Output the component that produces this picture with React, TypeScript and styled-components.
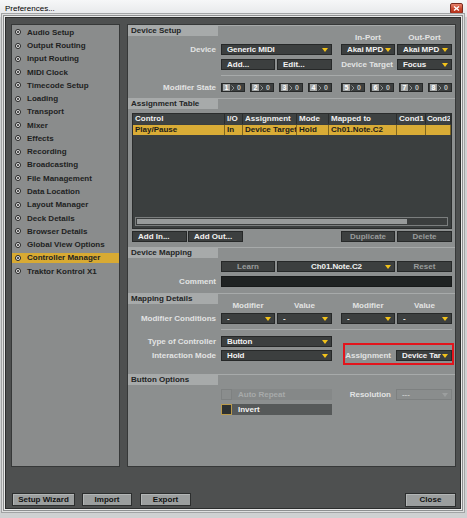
import React from "react";
import styled, { createGlobalStyle, css } from "styled-components";

const FONT = `"Liberation Sans", Arial, sans-serif`;

const GlobalStyle = createGlobalStyle`
  html, body { margin: 0; padding: 0; }
  body { font-family: ${FONT}; background: #ffffff; }
  * { box-sizing: border-box; }
`;

const Window = styled.div`
  width: 467px;
  height: 518px;
  display: flex;
  flex-direction: column;
  background: #cfd1d2;
  overflow: hidden;
`;

const TitleBar = styled.div`
  height: 17px;
  flex: none;
  display: flex;
  align-items: center;
  justify-content: space-between;
  padding: 0 4px 0 5px;
  background: linear-gradient(#f6f7f8, #e4e6e8);
  font: 400 8px ${FONT};
  color: #000;
`;

const CloseBox = styled.div`
  width: 13px;
  height: 11px;
  border-radius: 2px;
  margin-top: -1px;
  background: linear-gradient(#e8856f, #c8452c 55%, #b2311b);
  border: 1px solid #7a2a1e;
  display: flex;
  align-items: center;
  justify-content: center;
`;

const Client = styled.div`
  height: 492px;
  flex: none;
  margin: 0 6px 0 5px;
  background: #4e5050;
  border: 1px solid #2b2d2d;
  box-shadow: 0 0 0 1px #e9eaea, 0 0 0 2px #8d8f90, 0 0 0 3px #dfe0e0, 0 0 0 4px #a2a4a5;
  padding: 6px 4px 0 5px;
  display: flex;
  flex-direction: column;
`;

const Panels = styled.div`
  height: 443px;
  flex: none;
  display: flex;
  gap: 7px;
`;

const Sidebar = styled.div`
  width: 109px;
  flex: none;
  background: #8a8c8c;
  border: 1px solid #363838;
  padding-top: 2.3px;
  display: flex;
  flex-direction: column;
  gap: 3.28px;
`;

const NavItem = styled.div<{ $active?: boolean }>`
  height: 10px;
  display: flex;
  align-items: center;
  gap: 6px;
  padding-left: 3px;
  font: 700 8px ${FONT};
  color: #1e1f1f;
  white-space: nowrap;
  background: ${(p) => (p.$active ? "#d8aa33" : "transparent")};
`;

const Main = styled.div`
  flex: 1;
  background: #8c8f8f;
  border: 1px solid #363838;
  display: flex;
  flex-direction: column;
`;

const Section = styled.div<{ $mt?: number }>`
  border-top: 1px solid #a7aaaa;
  margin-top: ${(p) => p.$mt ?? 0}px;
  display: flex;
  flex-direction: column;
`;

const SectionHead = styled.div`
  width: 90px;
  height: 10px;
  background: #a7aaaa;
  color: #232525;
  font: 700 8px ${FONT};
  line-height: 10px;
  padding-left: 3px;
  white-space: nowrap;
`;

const Row = styled.div<{ $mt?: number; $h?: number; $pl?: number }>`
  display: flex;
  align-items: center;
  flex: none;
  height: ${(p) => p.$h ?? 11}px;
  margin-top: ${(p) => p.$mt ?? 0}px;
  padding-left: ${(p) => p.$pl ?? 0}px;
`;

const Label = styled.div<{ $w?: number; $mr?: number }>`
  width: ${(p) => p.$w ?? 88}px;
  margin-right: ${(p) => p.$mr ?? 5}px;
  flex: none;
  text-align: right;
  color: #e2e3e3;
  font: 700 8px ${FONT};
  white-space: nowrap;
`;

const Group = styled.div<{ $between?: boolean; $tight?: boolean }>`
  width: 111px;
  flex: none;
  display: flex;
  align-items: center;
  gap: ${(p) => (p.$tight ? 0 : 2)}px;
  justify-content: ${(p) => (p.$between ? "space-between" : "flex-start")};
`;

const GroupGap = styled.div`
  width: 9px;
  flex: none;
`;

const Fill = styled.div`
  flex: 1;
`;

const Caption = styled.div<{ $w: number }>`
  width: ${(p) => p.$w}px;
  flex: none;
  text-align: center;
  color: #e2e3e3;
  font: 700 8px ${FONT};
  line-height: 8px;
  white-space: nowrap;
`;

const darkBox = css`
  height: 11px;
  flex: none;
  background: #3c3f3f;
  border: 1px solid #262828;
  font: 700 8px ${FONT};
  line-height: 9px;
  white-space: nowrap;
  overflow: hidden;
`;

const Dropdown = styled.div<{ $w: number; $disabled?: boolean }>`
  ${darkBox};
  width: ${(p) => p.$w}px;
  display: flex;
  align-items: center;
  padding: 0 3px 0 5px;
  gap: 1px;
  color: ${(p) => (p.$disabled ? "#c5c7c7" : "#f2f2f2")};
  ${(p) =>
    p.$disabled &&
    css`
      background: #8a8d8d;
      border-color: #7d8080;
    `}
`;

const DropText = styled.span<{ $center?: boolean }>`
  flex: 1;
  overflow: hidden;
  letter-spacing: -0.1px;
  text-align: ${(p) => (p.$center ? "center" : "left")};
  padding-left: ${(p) => (p.$center ? 6 : 0)}px;
`;

const Button = styled.div<{ $w: number; $dim?: boolean; $center?: boolean }>`
  ${darkBox};
  width: ${(p) => p.$w}px;
  color: ${(p) => (p.$dim ? "#999c9c" : "#f2f2f2")};
  text-align: ${(p) => (p.$center ? "center" : "left")};
  padding-left: ${(p) => (p.$center ? 0 : 5)}px;
`;

const TextField = styled.div<{ $w: number }>`
  width: ${(p) => p.$w}px;
  height: 11px;
  flex: none;
  background: #1f2222;
  border: 1px solid #171919;
`;

const Separator = styled.div<{ $mt: number }>`
  height: 1px;
  width: 231px;
  margin: ${(p) => p.$mt}px 0 0 93px;
  background: #a7aaaa;
  flex: none;
`;

const ModBox = styled.div`
  width: 24px;
  height: 9px;
  flex: none;
  background: #3d4040;
  border: 1px solid #262828;
  display: flex;
  align-items: center;
  padding-left: 1px;
  gap: 1px;
  font: 700 7px ${FONT};
`;

const ModNum = styled.span`
  width: 7px;
  height: 7px;
  background: #a3a6a6;
  color: #ffffff;
  text-align: center;
  line-height: 7px;
`;

const ModZero = styled.span`
  color: #c3c5c5;
  line-height: 7px;
  margin-left: 1px;
`;

const Table = styled.div`
  margin: 4px 0 0 4px;
  width: 320px;
  height: 116px;
  flex: none;
  background: #3b3f3f;
  border: 1px solid #2a2c2c;
  display: flex;
  flex-direction: column;
`;

const TRow = styled.div<{ $sel?: boolean }>`
  display: grid;
  grid-template-columns: 92px 18px 54px 32px 68px 29px 1fr;
  height: 10px;
  flex: none;
  margin-top: ${(p) => (p.$sel ? 1 : 0)}px;
  background: ${(p) => (p.$sel ? "#d9ac36" : "#3e4242")};
  color: ${(p) => (p.$sel ? "#1b1b1b" : "#f0f0f0")};
`;

const TCell = styled.div<{ $sel?: boolean }>`
  font: 700 8px ${FONT};
  line-height: 10px;
  padding-left: 2px;
  white-space: nowrap;
  overflow: hidden;
  border-right: 1px solid ${(p) => (p.$sel ? "#7e6620" : "#2a2d2d")};
  &:last-child {
    padding-left: 1px;
    letter-spacing: -0.2px;
  }
`;

const TBody = styled.div`
  flex: 1;
`;

const ScrollTrack = styled.div`
  height: 9px;
  margin: 0 3px 2px 2px;
  border: 1px solid #7b7e7e;
  background: #3b3e3e;
  padding: 1px;
  flex: none;
`;

const ScrollThumb = styled.div`
  height: 100%;
  background: #989b9b;
`;

const Check = styled.div<{ $on?: boolean }>`
  width: 11px;
  height: 11px;
  flex: none;
  border: 1px solid ${(p) => (p.$on ? "#b99a4c" : "#7e8181")};
  background: ${(p) => (p.$on ? "#2d3131" : "#8a8d8d")};
`;

const CheckBar = styled.div<{ $on?: boolean }>`
  width: 100px;
  height: 11px;
  flex: none;
  background: ${(p) => (p.$on ? "#565959" : "#858888")};
  color: ${(p) => (p.$on ? "#f2f2f2" : "#a7aaaa")};
  font: 700 8px ${FONT};
  line-height: 11px;
  padding-left: 6px;
`;

const Highlight = styled.div`
  position: relative;
  width: 111px;
  flex: none;
  display: flex;
  align-items: center;
  &::after {
    content: "";
    position: absolute;
    top: -7px;
    bottom: -4px;
    left: 2px;
    right: -2px;
    border: 2px solid #e3141c;
    pointer-events: none;
  }
`;

const Footer = styled.div`
  margin-top: 26px;
  height: 14px;
  flex: none;
  display: flex;
  align-items: flex-start;
  padding-left: 1px;
`;

const FooterButton = styled.div<{ $w: number; $mr?: number; $h?: number }>`
  width: ${(p) => p.$w}px;
  height: ${(p) => p.$h ?? 13}px;
  margin-right: ${(p) => p.$mr ?? 0}px;
  flex: none;
  background: #9b9e9e;
  border: 1px solid #2c2e2e;
  box-shadow: inset 1px 1px 0 #b3b6b6;
  color: #111;
  font: 700 8px ${FONT};
  line-height: ${(p) => (p.$h ?? 13) - 2}px;
  text-align: center;
`;

const Arrow = ({ color = "#f1c21b" }: { color?: string }) => (
  <svg width="6" height="4" viewBox="0 0 6 4" style={{ flex: "none" }}>
    <polygon points="0,0 6,0 3,4" fill={color} />
  </svg>
);

const Bullet = () => (
  <svg width="6" height="6" viewBox="0 0 6 6" style={{ flex: "none" }}>
    <circle cx="3" cy="3" r="2.5" fill="#ececec" stroke="#1e1e1e" strokeWidth="1" />
    <circle cx="3" cy="3" r="1" fill="#1e1e1e" />
  </svg>
);

const Chevron = () => (
  <svg width="4" height="6" viewBox="0 0 4 6" style={{ flex: "none" }}>
    <polyline points="0.5,0.5 3,3 0.5,5.5" fill="none" stroke="#8e9191" strokeWidth="1" />
  </svg>
);

const Select = ({
  w,
  text,
  center,
  disabled,
}: {
  w: number;
  text: string;
  center?: boolean;
  disabled?: boolean;
}) => (
  <Dropdown $w={w} $disabled={disabled}>
    <DropText $center={center}>{text}</DropText>
    <Arrow color={disabled ? "#9c9f9f" : "#f1c21b"} />
  </Dropdown>
);

const Mod = ({ n }: { n: number }) => (
  <ModBox>
    <ModNum>{n}</ModNum>
    <Chevron />
    <ModZero>0</ModZero>
  </ModBox>
);

const navItems = [
  "Audio Setup",
  "Output Routing",
  "Input Routing",
  "MIDI Clock",
  "Timecode Setup",
  "Loading",
  "Transport",
  "Mixer",
  "Effects",
  "Recording",
  "Broadcasting",
  "File Management",
  "Data Location",
  "Layout Manager",
  "Deck Details",
  "Browser Details",
  "Global View Options",
  "Controller Manager",
  "Traktor Kontrol X1",
];

const columns = ["Control", "I/O", "Assignment", "Mode", "Mapped to", "Cond1", "Cond2"];
const rowData = ["Play/Pause", "In", "Device Target", "Hold", "Ch01.Note.C2", "", ""];

export default function App() {
  return (
    <>
      <GlobalStyle />
      <Window>
        <TitleBar>
          <span>Preferences...</span>
          <CloseBox>
            <svg width="7" height="5" viewBox="0 0 7 5">
              <path d="M1 0.5 L6 4.5 M6 0.5 L1 4.5" stroke="#ffffff" strokeWidth="1.4" />
            </svg>
          </CloseBox>
        </TitleBar>
        <Client>
          <Panels>
            <Sidebar>
              {navItems.map((t) => (
                <NavItem key={t} $active={t === "Controller Manager"}>
                  <Bullet />
                  {t}
                </NavItem>
              ))}
            </Sidebar>
            <Main>
              <Section>
                <SectionHead>Device Setup</SectionHead>
                <Row $mt={-2} $h={8}>
                  <Label />
                  <Group />
                  <GroupGap />
                  <Group>
                    <Caption $w={54}>In-Port</Caption>
                    <Caption $w={55}>Out-Port</Caption>
                  </Group>
                </Row>
                <Row $mt={2}>
                  <Label>Device</Label>
                  <Group>
                    <Select w={111} text="Generic MIDI" />
                  </Group>
                  <GroupGap />
                  <Group>
                    <Select w={54} text="Akai MPD" />
                    <Select w={55} text="Akai MPD" />
                  </Group>
                </Row>
                <Row $mt={4}>
                  <Label />
                  <Group>
                    <Button $w={54}>Add...</Button>
                    <Button $w={55}>Edit...</Button>
                  </Group>
                  <GroupGap />
                  <Group>
                    <Label $w={52} $mr={2}>
                      Device Target
                    </Label>
                    <Select w={55} text="Focus" />
                  </Group>
                </Row>
                <Separator $mt={5} />
                <Row $mt={7} $h={9}>
                  <Label>Modifier State</Label>
                  <Group $between>
                    {[1, 2, 3, 4].map((n) => (
                      <Mod key={n} n={n} />
                    ))}
                  </Group>
                  <GroupGap />
                  <Group $between>
                    {[5, 6, 7, 8].map((n) => (
                      <Mod key={n} n={n} />
                    ))}
                  </Group>
                </Row>
              </Section>

              <Section $mt={6}>
                <SectionHead>Assignment Table</SectionHead>
                <Table>
                  <TRow>
                    {columns.map((c) => (
                      <TCell key={c}>{c}</TCell>
                    ))}
                  </TRow>
                  <TRow $sel>
                    {rowData.map((c, i) => (
                      <TCell key={i} $sel>
                        {c}
                      </TCell>
                    ))}
                  </TRow>
                  <TBody />
                  <ScrollTrack>
                    <ScrollThumb style={{ width: "87.5%" }} />
                  </ScrollTrack>
                </Table>
                <Row $mt={2} $pl={4}>
                  <Button $w={55} style={{ marginRight: 1 }}>
                    Add In...
                  </Button>
                  <Button $w={55}>Add Out...</Button>
                  <Fill />
                  <Group>
                    <Button $w={54} $dim $center>
                      Duplicate
                    </Button>
                    <Button $w={55} $dim $center>
                      Delete
                    </Button>
                  </Group>
                  <div style={{ width: 3 }} />
                </Row>
              </Section>

              <Section $mt={5}>
                <SectionHead>Device Mapping</SectionHead>
                <Row $mt={3}>
                  <Label />
                  <Button $w={54} $dim $center style={{ marginRight: 2 }}>
                    Learn
                  </Button>
                  <Select w={118} text="Ch01.Note.C2" center />
                  <Button $w={55} $dim $center style={{ marginLeft: 2 }}>
                    Reset
                  </Button>
                </Row>
                <Row $mt={4}>
                  <Label>Comment</Label>
                  <TextField $w={231} />
                </Row>
              </Section>

              <Section $mt={6}>
                <SectionHead>Mapping Details</SectionHead>
                <Row $mt={-2} $h={8}>
                  <Label />
                  <Group>
                    <Caption $w={54}>Modifier</Caption>
                    <Caption $w={55}>Value</Caption>
                  </Group>
                  <GroupGap />
                  <Group>
                    <Caption $w={54}>Modifier</Caption>
                    <Caption $w={55}>Value</Caption>
                  </Group>
                </Row>
                <Row $mt={3}>
                  <Label>Modifier Conditions</Label>
                  <Group>
                    <Select w={54} text="-" />
                    <Select w={55} text="-" />
                  </Group>
                  <GroupGap />
                  <Group>
                    <Select w={54} text="-" />
                    <Select w={55} text="-" />
                  </Group>
                </Row>
                <Separator $mt={5} />
                <Row $mt={6}>
                  <Label>Type of Controller</Label>
                  <Group>
                    <Select w={111} text="Button" />
                  </Group>
                </Row>
                <Row $mt={3}>
                  <Label>Interaction Mode</Label>
                  <Group>
                    <Select w={111} text="Hold" />
                  </Group>
                  <GroupGap />
                  <Highlight>
                    <Label $w={50} $mr={5}>
                      Assignment
                    </Label>
                    <Select w={56} text="Device Target" />
                  </Highlight>
                </Row>
              </Section>

              <Section $mt={13}>
                <SectionHead>Button Options</SectionHead>
                <Row $mt={4}>
                  <Label />
                  <Group $tight>
                    <Check />
                    <CheckBar>Auto Repeat</CheckBar>
                  </Group>
                  <GroupGap />
                  <Group $tight>
                    <Label $w={50} $mr={5}>
                      Resolution
                    </Label>
                    <Select w={56} text="---" disabled />
                  </Group>
                </Row>
                <Row $mt={4}>
                  <Label />
                  <Group $tight>
                    <Check $on />
                    <CheckBar $on>Invert</CheckBar>
                  </Group>
                </Row>
              </Section>
            </Main>
          </Panels>
          <Footer>
            <FooterButton $w={63} $mr={7}>
              Setup Wizard
            </FooterButton>
            <FooterButton $w={50} $mr={8}>
              Import
            </FooterButton>
            <FooterButton $w={51}>Export</FooterButton>
            <Fill />
            <FooterButton $w={51} $h={14}>
              Close
            </FooterButton>
          </Footer>
        </Client>
      </Window>
    </>
  );
}
